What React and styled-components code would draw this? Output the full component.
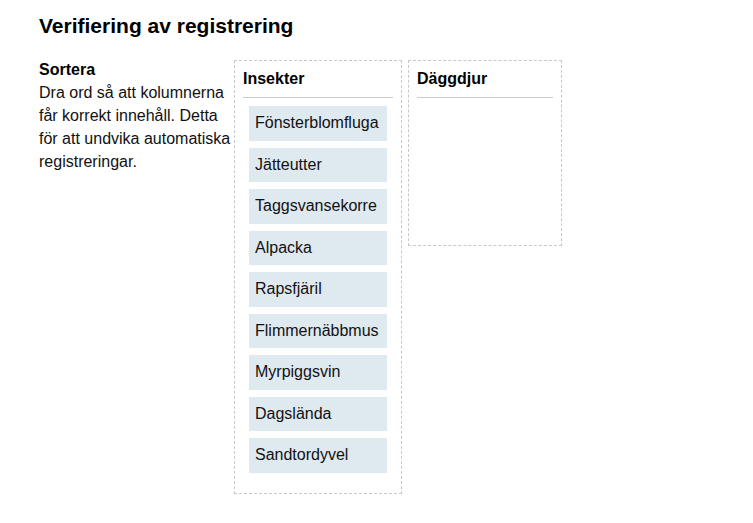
import React from 'react'
import styled, { createGlobalStyle } from 'styled-components'

const insects = [
    'Fönsterblomfluga',
    'Jätteutter',
    'Taggsvansekorre',
    'Alpacka',
    'Rapsfjäril',
    'Flimmernäbbmus',
    'Myrpiggsvin',
    'Dagslända',
    'Sandtordyvel',
]

function App() {
  return (
    <>
      <GlobalStyle />
      <Page>
        <Title>Verifiering av registrering</Title>
        <Row>
          <Intro>
            <IntroTitle>Sortera</IntroTitle>
            Dra ord så att kolumnerna får korrekt innehåll. Detta för att undvika automatiska registreringar.
          </Intro>
          <Column $width={168}>
            <ColumnHeader>Insekter</ColumnHeader>
            <WordList>
              {insects.map((w) => (
                <Word key={w}>{w}</Word>
              ))}
            </WordList>
          </Column>
          <Column $width={154}>
            <ColumnHeader>Däggdjur</ColumnHeader>
            <WordList $empty />
          </Column>
        </Row>
      </Page>
    </>
  )
}

export default App

const GlobalStyle = createGlobalStyle`
    body {
        margin: 0;
        background: #fff;
        font-family: "Liberation Sans", Arial, sans-serif;
        color: #111;
    }
`

const Page = styled.div`
    padding: 14px 0 0 39px;
`

const Title = styled.h1`
    margin: 0;
    font-size: 21px;
    font-weight: 700;
    line-height: normal;
    color: #000;
`

const Row = styled.div`
    display: flex;
    align-items: flex-start;
    margin-top: 20px;
`

const Intro = styled.div`
    width: 195px;
    font-size: 16px;
    line-height: 23px;
`

const IntroTitle = styled.div`
    font-weight: 700;
    color: #000;
`

const Column = styled.div`
    box-sizing: border-box;
    width: ${(p) => p.$width}px;
    margin-top: 2px;
    margin-right: 6px;
    padding: 8px 8px 0;
    border: 1px dashed #c8c8c8;
`

const ColumnHeader = styled.div`
    font-size: 16px;
    font-weight: 700;
    line-height: 19px;
    padding-bottom: 9px;
    border-bottom: 1px solid #cccccc;
    color: #000;
`

const WordList = styled.div`
    display: flex;
    flex-direction: column;
    gap: 7px;
    padding: 8px 6px 20px;
    min-height: ${(p) => (p.$empty ? '119px' : '0')};
`

const Word = styled.div`
    background: #dfe9f0;
    padding: 8px 6px;
    font-size: 16px;
    line-height: 18.5px;
    color: #111;
`
